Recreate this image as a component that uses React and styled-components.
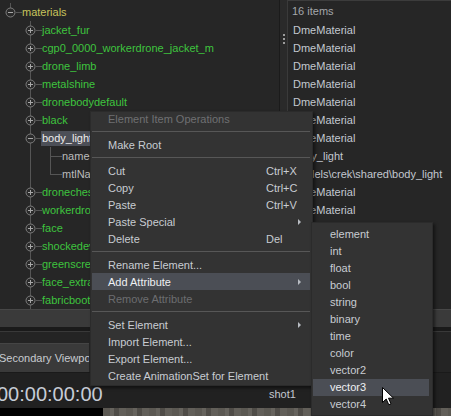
import React from 'react';
import styled, { createGlobalStyle } from 'styled-components';

const Global = createGlobalStyle`
  html, body { margin: 0; padding: 0; background: #262626; }
  body { font-family: "Liberation Sans", Arial, sans-serif; font-size: 11px; }
  * { box-sizing: border-box; }
`;

const Screen = styled.div`
  position: relative;
  width: 451px;
  height: 416px;
  overflow: hidden;
  background: #262626;
  display: flex;
  flex-direction: column;
`;

const Panels = styled.div`
  display: flex;
  height: 309px;
  flex: none;
`;

const TreePanel = styled.div`
  width: 279px;
  flex: none;
  padding-top: 3px;
  overflow: hidden;
  background: #262626;
`;

const Splitter = styled.div`
  width: 9px;
  flex: none;
  border-left: 1px solid #1b1b1b;
  border-right: 1px solid #3a3a3a;
  background: #2a2a2a;
  display: flex;
  flex-direction: column;
  align-items: center;
  gap: 2px;
  padding-top: 34px;
`;

const Dot = styled.span`
  width: 2px;
  height: 2px;
  background: #9c9c9c;
`;

const ListPanel = styled.div`
  flex: 1;
  overflow: hidden;
  border-top: 1px solid #3c3c3c;
  background: #262626;
`;

const ListHeader = styled.div`
  height: 20px;
  line-height: 20px;
  padding-left: 4px;
  color: #a4a7ab;
  white-space: nowrap;
`;

const ListRow = styled.div`
  height: 18px;
  line-height: 18px;
  padding-left: 5px;
  color: #c3c8d0;
  white-space: nowrap;
`;

const TreeRow = styled.div`
  display: flex;
  align-items: center;
  height: 18px;
  white-space: nowrap;
`;

const Guide = styled.div`
  position: relative;
  flex: none;
  width: 20px;
  height: 18px;
  display: flex;
  align-items: center;
  padding-left: 5px;
  &::before {
    content: '';
    position: absolute;
    left: 10px;
    width: 1px;
    background: #555555;
    top: ${p => (p.$up ? '0' : '9px')};
    bottom: ${p => (p.$down ? '0' : '9px')};
    display: ${p => (p.$up || p.$down ? 'block' : 'none')};
  }
  &::after {
    content: '';
    position: absolute;
    top: 9px;
    height: 1px;
    background: #555555;
    left: ${p => (p.$branch === 'leaf' ? '10px' : '16px')};
    right: -2px;
    display: ${p => (p.$branch ? 'block' : 'none')};
  }
  svg { position: relative; z-index: 1; }
`;

const NodeLabel = styled.span`
  margin-left: ${p => (p.$selected ? '1px' : '2px')};
  padding: 0 ${p => (p.$selected ? '1px' : '0')};
  line-height: ${p => (p.$selected ? '15px' : '18px')};
  color: ${p => p.$color};
  background: ${p => (p.$selected ? '#4c4f57' : 'transparent')};
`;

const Toolbar = styled.div`
  height: 18px;
  flex: none;
  background: #3a3a3a;
  border-top: 1px solid #474747;
`;

const Gap = styled.div`
  height: 16px;
  flex: none;
  background: linear-gradient(#1a1a1a 0 4px, #393939 4px 5px, #242424 5px);
`;

const TabBar = styled.div`
  height: 29px;
  flex: none;
  display: flex;
  background: #242424;
`;

const Tab = styled.div`
  width: 89px;
  display: flex;
  align-items: center;
  overflow: hidden;
  white-space: nowrap;
  text-indent: -1px;
  background: #3a3a3a;
  border-top: 1px solid #454545;
  color: #c8cbd0;
  font-size: 11px;
`;

const TimeRow = styled.div`
  height: 36px;
  flex: none;
  display: flex;
  align-items: flex-start;
  background: #212121;
  border-top: 1px solid #1a1a1a;
`;

const Timecode = styled.div`
  width: 272px;
  flex: none;
  margin-left: -3px;
  margin-top: 11px;
  font-size: 20px;
  line-height: 20px;
  color: #c6ccd6;
  white-space: nowrap;
`;

const Shot = styled.div`
  margin-top: 15px;
  line-height: 13px;
  color: #c3c8d0;
`;

const Strip = styled.div`
  flex: 1;
  display: flex;
`;

const BlackPad = styled.div`
  width: 103px;
  background: #000;
`;

const Footage = styled.div`
  flex: 1;
  background:
    repeating-linear-gradient(90deg, #5b5852 0 7px, #66635d 7px 11px, #4f4c47 11px 16px, #625f59 16px 23px),
    #5b5852;
`;

const Menu = styled.div`
  position: absolute;
  left: ${p => p.$x}px;
  top: ${p => p.$y}px;
  width: ${p => p.$w}px;
  padding: ${p => p.$pad};
  background: #333333;
  border: 1px solid #2b2b2b;
  box-shadow: 2px 2px 3px rgba(0, 0, 0, 0.5);
  z-index: ${p => p.$z};
`;

const MenuTitle = styled.div`
  height: 15px;
  line-height: 15px;
  padding-left: 17px;
  color: #6f7072;
`;

const MenuItem = styled.div`
  display: grid;
  grid-template-columns: 158px 30px 14px;
  align-items: center;
  height: 17px;
  margin: 0 2px 0 1px;
  padding-left: 16px;
  color: ${p => (p.$disabled ? '#6c6d70' : p.$active ? '#eef0f3' : '#c8ccd2')};
  background: ${p => (p.$active ? '#4b4e55' : 'transparent')};
  white-space: nowrap;
`;

const SubItem = styled.div`
  height: 17px;
  line-height: 17px;
  margin: 0 3px 0 1px;
  padding-left: 17px;
  color: ${p => (p.$active ? '#eef0f3' : '#c8ccd2')};
  background: ${p => (p.$active ? '#4b4e55' : 'transparent')};
`;

const Shortcut = styled.span`
  color: #c8ccd2;
`;

const Arrow = styled.span`
  width: 0;
  height: 0;
  margin-left: 2px;
  border-top: 3px solid transparent;
  border-bottom: 3px solid transparent;
  border-left: 3px solid #b8bcc2;
`;

const Separator = styled.div`
  height: 1px;
  margin: 4px 2px 4px 1px;
  background: #575757;
`;

const Cursor = styled.svg`
  position: absolute;
  left: 382px;
  top: 387px;
  z-index: 5;
`;

const Expander = ({ open }) => (
  <svg width="11" height="11" viewBox="0 0 11 11">
    <circle cx="5.5" cy="5.5" r="4.5" fill="#2b2b2b" stroke="#7e7e7e" strokeWidth="1" />
    <rect x="3" y="5" width="5" height="1" fill="#a8a8a8" />
    {!open && <rect x="5" y="3" width="1" height="5" fill="#a8a8a8" />}
  </svg>
);

const GREEN = '#3ec43e';

const branches = [
  'jacket_fur',
  'cgp0_0000_workerdrone_jacket_m',
  'drone_limb',
  'metalshine',
  'dronebodydefault',
  'black',
];
const after = ['dronechest', 'workerdrone_body', 'face', 'shockedevice', 'greenscreen', 'face_extras', 'fabricboots'];

const listValues = [
  'DmeMaterial', 'DmeMaterial', 'DmeMaterial', 'DmeMaterial', 'DmeMaterial', 'DmeMaterial',
  'DmeMaterial', 'body_light', 'models\\crek\\shared\\body_light',
  'DmeMaterial', 'DmeMaterial', 'DmeMaterial', 'DmeMaterial', 'DmeMaterial', 'DmeMaterial', 'DmeMaterial',
];

const menuGroups = [
  [{ label: 'Make Root' }],
  [
    { label: 'Cut', key: 'Ctrl+X' },
    { label: 'Copy', key: 'Ctrl+C' },
    { label: 'Paste', key: 'Ctrl+V' },
    { label: 'Paste Special', sub: true },
    { label: 'Delete', key: 'Del' },
  ],
  [
    { label: 'Rename Element...' },
    { label: 'Add Attribute', sub: true, active: true },
    { label: 'Remove Attribute', disabled: true },
  ],
  [
    { label: 'Set Element', sub: true },
    { label: 'Import Element...' },
    { label: 'Export Element...' },
    { label: 'Create AnimationSet for Element' },
  ],
];

const subItems = ['element', 'int', 'float', 'bool', 'string', 'binary', 'time', 'color', 'vector2', 'vector3', 'vector4'];

const ChildRow = ({ label }) => (
  <TreeRow>
    <Guide />
    <Guide $up $down $branch="node">
      <Expander />
    </Guide>
    <NodeLabel $color={GREEN}>{label}</NodeLabel>
  </TreeRow>
);

export default function App() {
  return (
    <Screen>
      <Global />
      <Panels>
        <TreePanel>
          <TreeRow>
            <Guide $up $branch="node">
              <Expander open />
            </Guide>
            <NodeLabel $color="#c8c35c">materials</NodeLabel>
          </TreeRow>
          {branches.map(b => (
            <ChildRow key={b} label={b} />
          ))}
          <TreeRow>
            <Guide />
            <Guide $up $down $branch="node">
              <Expander open />
            </Guide>
            <NodeLabel $selected $color="#ececec">body_light</NodeLabel>
          </TreeRow>
          <TreeRow>
            <Guide />
            <Guide $up $down />
            <Guide $up $down $branch="leaf" />
            <NodeLabel $color="#bcbcbc">name</NodeLabel>
          </TreeRow>
          <TreeRow>
            <Guide />
            <Guide $up $down />
            <Guide $up $branch="leaf" />
            <NodeLabel $color="#bcbcbc">mtlName</NodeLabel>
          </TreeRow>
          {after.map(b => (
            <ChildRow key={b} label={b} />
          ))}
        </TreePanel>
        <Splitter>
          <Dot />
          <Dot />
          <Dot />
        </Splitter>
        <ListPanel>
          <ListHeader>16 items</ListHeader>
          {listValues.map((v, i) => (
            <ListRow key={i}>{v}</ListRow>
          ))}
        </ListPanel>
      </Panels>
      <Toolbar />
      <Gap />
      <TabBar>
        <Tab>Secondary Viewport</Tab>
      </TabBar>
      <TimeRow>
        <Timecode>00:00:00:00</Timecode>
        <Shot>shot1</Shot>
      </TimeRow>
      <Strip>
        <BlackPad />
        <Footage />
      </Strip>

      <Menu $x={90} $y={111} $w={223} $pad="0 0 1px" $z={2}>
        <MenuTitle>Element Item Operations</MenuTitle>
        {menuGroups.map((g, gi) => (
          <React.Fragment key={gi}>
            <Separator />
            {g.map(it => (
              <MenuItem key={it.label} $active={it.active} $disabled={it.disabled}>
                <span>{it.label}</span>
                <Shortcut>{it.key || ''}</Shortcut>
                {it.sub ? <Arrow /> : <span />}
              </MenuItem>
            ))}
          </React.Fragment>
        ))}
      </Menu>

      <Menu $x={311} $y={222} $w={122} $pad="3px 0 2px" $z={3}>
        {subItems.map(s => (
          <SubItem key={s} $active={s === 'vector3'}>{s}</SubItem>
        ))}
      </Menu>

      <Cursor width="13" height="19" viewBox="0 0 13 19">
        <path d="M0.5 0.5 L0.5 15.5 L4.2 12 L6.8 17.8 L9 16.8 L6.5 11.2 L11.5 11.2 Z" fill="#ffffff" stroke="#000000" strokeWidth="1" strokeLinejoin="miter" />
      </Cursor>
    </Screen>
  );
}
